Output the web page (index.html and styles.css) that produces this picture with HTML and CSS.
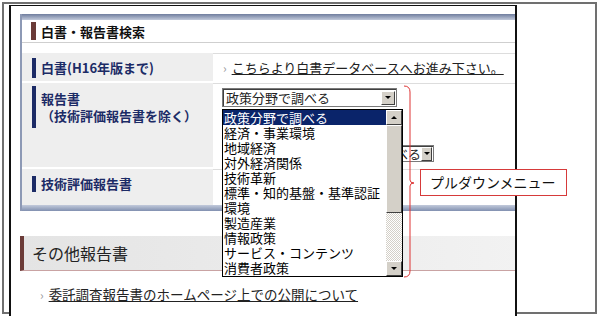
FILE: index.html
```html
<!DOCTYPE html>
<html lang="ja">
<head>
  <meta charset="UTF-8">
  <title>白書・報告書検索</title>
  <link rel="stylesheet" href="styles.css">
</head>
<body>

  <div class="outer">
    <div class="frame">

      <div class="panel">
        <div class="panel-head"><span class="marker"></span>白書・報告書検索</div>

        <div class="rows">
          <div class="row r1">
            <div class="label"><div class="lab">白書(H16年版まで)</div></div>
            <div class="value">
              <span class="arrow">›</span><a href="#" class="link">こちらより白書データベースへお進み下さい。</a>
            </div>
          </div>

          <div class="row r2">
            <div class="label"><div class="lab">報告書<br>（技術評価報告書を除く）</div></div>
            <div class="value">
              <div class="select sel1"><span class="sel-text">政策分野で調べる</span><span class="sel-btn"><i class="tri down"></i></span></div>
              <div class="select sel2"><span class="sel-text">政策分野で調べる</span><span class="sel-btn"><i class="tri down"></i></span></div>
            </div>
          </div>

          <div class="row r3">
            <div class="label"><div class="lab">技術評価報告書</div></div>
            <div class="value"></div>
          </div>
        </div>
      </div>

      <h2 class="other-head">その他報告書</h2>
      <p class="other-link"><span class="arrow">›</span><a href="#" class="link">委託調査報告書のホームページ上での公開について</a></p>

    </div>
  </div>

  <!-- opened pulldown -->
  <div class="listbox">
    <ul class="items">
      <li class="selected">政策分野で調べる</li>
      <li>経済・事業環境</li>
      <li>地域経済</li>
      <li>対外経済関係</li>
      <li>技術革新</li>
      <li>標準・知的基盤・基準認証</li>
      <li>環境</li>
      <li>製造産業</li>
      <li>情報政策</li>
      <li>サービス・コンテンツ</li>
      <li>消費者政策</li>
    </ul>
    <div class="scrollbar">
      <span class="sb-btn"><i class="tri up"></i></span>
      <span class="sb-thumb"></span>
      <span class="sb-track"></span>
      <span class="sb-btn"><i class="tri down"></i></span>
    </div>
  </div>

  <svg class="brace" width="20" height="196" viewBox="0 0 20 196">
    <path d="M4 2 Q10 2 10 8 L10 96 Q10 99 14 99 Q10 99 10 102 L10 187 Q10 193 4 193" fill="none" stroke="#dd3333" stroke-width="1"/>
  </svg>

  <div class="callout">プルダウンメニュー</div>

</body>
</html>
```

FILE: styles.css
```css
  body {
    margin: 0;
    position: relative;
    background-color: #fff;
    font-family: "Noto Sans CJK JP", "Noto Sans", sans-serif;
    color: #222;
  }

  .outer {
    margin: 2px;
    width: 591px;
    height: 308px;
    border: 2px solid #707070;
  }

  .frame {
    margin: 1px 0 0 5px;
    width: 495px;
    height: 302px;
    border: 2px solid #111;
    border-top-width: 1px;
    padding: 8px 0 0 9px;
    box-sizing: content-box;
    overflow: hidden;
    background-color: #fff;
  }

  .panel {
    width: 500px;
    border-left: 2px solid #8d99b5;
    box-sizing: border-box;
  }

  .panel::before, .panel::after {
    content: "";
    display: block;
    height: 6px;
  }

  .panel::before {
    background: linear-gradient(#6f7d9e, #c2cadb);
  }

  .panel::after {
    background: linear-gradient(#c2cadb, #8190b0);
  }

  .panel-head {
    height: 22px;
    display: flex;
    align-items: center;
    font-size: 13px;
    font-weight: bold;
    color: #111;
    border-bottom: 1px solid #cfcfcf;
    margin-bottom: 10px;
  }

  .marker {
    width: 5px;
    height: 18px;
    margin: 0 5px 0 9px;
    background-color: #6b3b38;
  }

  .rows {
    display: flex;
    flex-direction: column;
    gap: 2px;
  }

  .row {
    display: flex;
  }

  .label {
    width: 191px;
    background-color: #eeeeee;
    padding-left: 10px;
    box-sizing: border-box;
  }

  .lab {
    border-left: 4px solid #1c2b66;
    padding-left: 5px;
    font-size: 13px;
    font-weight: bold;
    color: #1c2b66;
    white-space: nowrap;
  }

  .value {
    flex: 1;
    border-top: 1px solid #dddddd;
    padding-left: 9px;
    font-size: 13px;
  }

  .r1 { height: 28px; }
  .r1 .label { padding-top: 5px; }
  .r1 .lab { line-height: 20px; }
  .r1 .value { display: flex; align-items: center; padding-left: 10px; }

  .r2 { height: 84px; }
  .r2 .label { padding-top: 3px; }
  .r2 .lab { line-height: 17px; padding-top: 4px; padding-bottom: 4px; }
  .r2 .value { padding-top: 4px; }

  .r3 { height: 36px; }
  .r3 .label { padding-top: 7px; }
  .r3 .lab { line-height: 16px; }

  .arrow {
    color: #999;
    font-size: 12px;
    margin-right: 5px;
  }

  .link {
    color: #222;
    text-decoration: underline;
  }

  .select {
    display: flex;
    align-items: center;
    background-color: #fff;
    border: 1px solid #7a7a7a;
    box-shadow: inset 1px 1px 0 #404040;
    box-sizing: border-box;
  }

  .sel1 {
    width: 175px;
    height: 19px;
  }

  .sel2 {
    width: 121px;
    height: 17px;
    margin: 38px 0 0 91px;
    overflow: hidden;
  }

  .sel-text {
    flex: 1;
    padding-left: 3px;
    font-size: 13px;
    line-height: 15px;
    white-space: nowrap;
  }

  .sel-btn, .sb-btn {
    width: 14px;
    height: 14px;
    margin-right: 1px;
    display: flex;
    align-items: center;
    justify-content: center;
    background-color: #d4d0c8;
    border: 1px solid;
    border-color: #fff #404040 #404040 #fff;
    box-sizing: border-box;
  }

  .tri {
    width: 0;
    height: 0;
    border-left: 3px solid transparent;
    border-right: 3px solid transparent;
  }

  .tri.down { border-top: 3px solid #000; }
  .tri.up { border-bottom: 3px solid #000; }

  .other-head {
    margin: 25px 0 0 0;
    width: 500px;
    height: 35px;
    display: flex;
    align-items: center;
    border-left: 4px solid #6b3b38;
    border-bottom: 1px solid #c9a3a3;
    padding-left: 8px;
    box-sizing: border-box;
    background: linear-gradient(to right, #e4e4e4, #f2f2f2);
    font-size: 16px;
    font-weight: normal;
    color: #222;
  }

  .other-link {
    margin: 13px 0 0 0;
    padding-left: 20px;
    font-size: 13.5px;
    line-height: 20px;
  }

  .listbox {
    position: absolute;
    left: 222px;
    top: 109px;
    width: 181px;
    height: 168px;
    border: 1px solid #000;
    background-color: #fff;
    box-sizing: border-box;
    display: flex;
  }

  .items {
    flex: 1;
    list-style: none;
    margin: 0;
    padding: 0;
    font-size: 13px;
    line-height: 15px;
    white-space: nowrap;
  }

  .items li {
    padding-left: 1px;
    color: #000;
  }

  .items li.selected {
    background-color: #0a246a;
    color: #fff;
  }

  .scrollbar {
    width: 16px;
    display: flex;
    flex-direction: column;
  }

  .scrollbar .sb-btn {
    width: 16px;
    height: 15px;
    margin: 0;
  }

  .sb-thumb {
    height: 88px;
    background-color: #d4d0c8;
    border: 1px solid;
    border-color: #fff #404040 #404040 #fff;
    box-sizing: border-box;
  }

  .sb-track {
    flex: 1;
    background-color: #eae8e3;
    background-image: repeating-conic-gradient(#d4d0c8 0 25%, #fff 0 50%);
    background-size: 2px 2px;
  }

  .brace {
    position: absolute;
    left: 400px;
    top: 84px;
  }

  .callout {
    position: absolute;
    left: 420px;
    top: 169px;
    width: 147px;
    height: 27px;
    border: 1px solid #d63a3a;
    background-color: #fff;
    box-sizing: border-box;
    padding-left: 9px;
    font-size: 14px;
    line-height: 25px;
    color: #111;
  }
```
